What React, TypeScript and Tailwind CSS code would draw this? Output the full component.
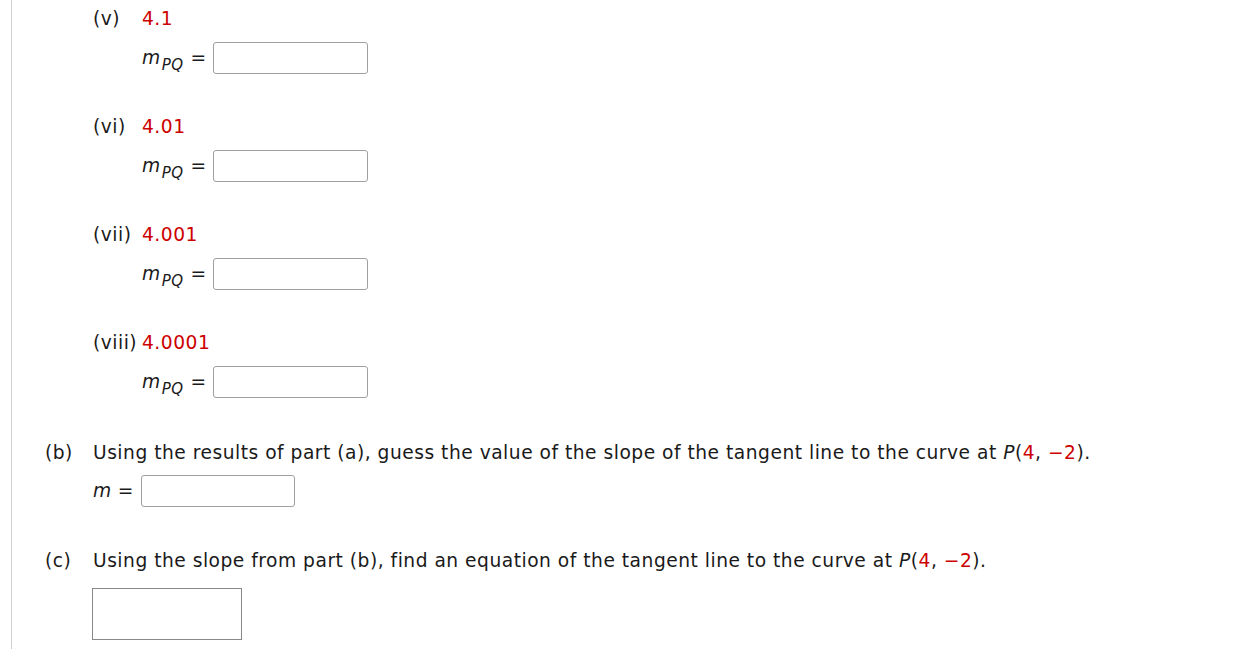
const font = { fontFamily: '"DejaVu Sans", Verdana, sans-serif' }

function Mpq() {
  return (
    <div className="flex items-center h-[32px] pl-[49px]">
      <span className="italic">m</span>
      <span className="italic text-[15px] relative top-[7px] ml-[1px]">PQ</span>
      <span className="ml-[7px] mr-[6px]">=</span>
      <input className="w-[155px] h-[32px] border border-[#a0a0a0] rounded-[3px] bg-white" />
    </div>
  )
}

function Item({ label, value }: { label: string; value: string }) {
  return (
    <div className="mb-[40px]">
      <div className="flex items-center h-[26px]">
        <span className="min-w-[49px] pr-[3px] whitespace-nowrap">{label}</span>
        <span className="text-[#cc0000]">{value}</span>
      </div>
      <div className="mt-[10px]">
        <Mpq />
      </div>
    </div>
  )
}

function Point() {
  return (
    <>
      <span className="italic">P</span>(<span className="text-[#cc0000]">4</span>,{' '}
      <span className="text-[#cc0000]">−2</span>).
    </>
  )
}

export default function App() {
  return (
    <div
      className="w-[1257px] h-[649px] bg-white overflow-hidden text-[18.67px] tracking-[0.5px] text-[#1a1a1a]"
      style={font}
    >
      <div className="ml-[11px] border-l border-[#d0d0d0] h-full pt-[6px]">
        <div className="pl-[81px]">
          <Item label="(v)" value="4.1" />
          <Item label="(vi)" value="4.01" />
          <Item label="(vii)" value="4.001" />
          <Item label="(viii)" value="4.0001" />
        </div>

        <div className="pl-[33px] pt-[2px]">
          <div className="flex items-center h-[26px]">
            <span className="w-[48px]">(b)</span>
            <span className="whitespace-nowrap">
              Using the results of part (a), guess the value of the slope of the tangent line to the curve at <Point />
            </span>
          </div>
          <div className="flex items-center pl-[48px] mt-[9px] h-[32px]">
            <span className="italic">m</span>
            <span className="ml-[6px] mr-[7px]">=</span>
            <input className="w-[154px] h-[32px] border border-[#a0a0a0] rounded-[3px] bg-white" />
          </div>

          <div className="flex items-center h-[26px] mt-[41px]">
            <span className="w-[48px]">(c)</span>
            <span className="whitespace-nowrap">
              Using the slope from part (b), find an equation of the tangent line to the curve at <Point />
            </span>
          </div>
          <div className="pl-[47px] mt-[14px]">
            <div className="w-[150px] h-[52px] border border-[#888]" />
          </div>
        </div>
      </div>
    </div>
  )
}
